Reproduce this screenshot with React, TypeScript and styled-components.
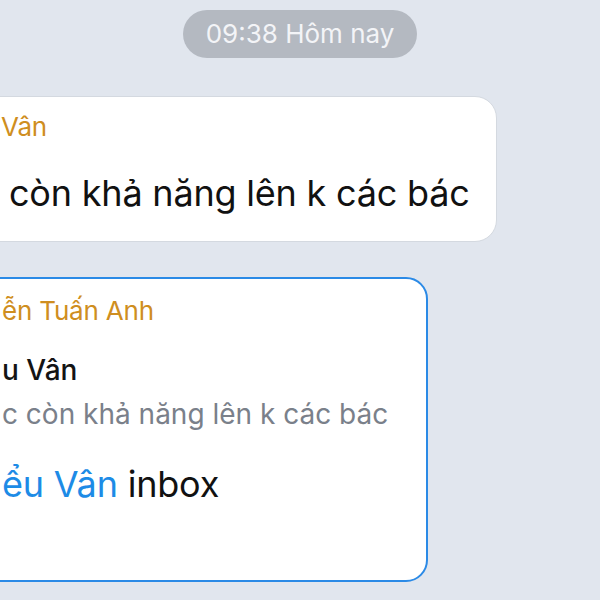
import styled, { createGlobalStyle } from 'styled-components'

const GlobalStyle = createGlobalStyle`
  html, body {
    margin: 0;
    padding: 0;
    background: #e1e6ee;
  }
  body {
    font-family: Inter, "Noto Sans", "Liberation Sans", sans-serif;
  }
`

const Chat = styled.div`
  width: 600px;
  height: 600px;
  overflow: hidden;
  background: #e1e6ee;
  display: flex;
  flex-direction: column;
  align-items: center;
  padding-top: 10px;
  box-sizing: border-box;
`

const TimePill = styled.div`
  height: 48px;
  padding: 0 23px;
  border-radius: 24px;
  background: #b4b9c1;
  color: #f3f4f7;
  font-size: 26px;
  line-height: 48px;
`

// incoming bubbles run past the left edge of the view
const Bubble = styled.div<{ $active?: boolean; $top: number; $pad: string }>`
  align-self: flex-start;
  margin-top: ${p => p.$top}px;
  margin-left: -30px;
  padding: ${p => p.$pad};
  background: #fff;
  border-radius: 22px;
  border: ${p => (p.$active ? '2px solid #2b8ae6' : '1px solid #d4d9e0')};
  white-space: nowrap;
`

const Sender = styled.div`
  color: #cf8e20;
  font-size: 26px;
  line-height: 32px;
  letter-spacing: -0.2px;
`

const Text = styled.div<{ $gap: number; $indent?: number }>`
  color: #111;
  font-size: 36px;
  line-height: 44px;
  letter-spacing: -0.2px;
  margin-top: ${p => p.$gap}px;
  padding-left: ${p => p.$indent ?? 0}px;
`

const Quote = styled.div`
  margin-top: 21px;
  display: flex;
  flex-direction: column;
  font-size: 28px;
  line-height: 44px;
`

const QuoteName = styled.div`
  color: #141414;
  font-weight: 500;
`

const QuoteText = styled.div`
  color: #7a808a;
`

const Mention = styled.span`
  color: #1d8be6;
`

export default function App() {
  return (
    <>
      <GlobalStyle />
      <Chat>
        <TimePill>09:38 Hôm nay</TimePill>

        <Bubble $top={38} $pad="14px 26px 26px 30px">
          <Sender>Vân</Sender>
          <Text $gap={28} $indent={8}>còn khả năng lên k các bác</Text>
        </Bubble>

        <Bubble $top={35} $pad="16px 38px 74px 30px" $active>
          <Sender>ễn Tuấn Anh</Sender>
          <Quote>
            <QuoteName>u Vân</QuoteName>
            <QuoteText>c còn khả năng lên k các bác</QuoteText>
          </Quote>
          <Text $gap={26}>
            <Mention>ểu Vân</Mention> inbox
          </Text>
        </Bubble>
      </Chat>
    </>
  )
}
